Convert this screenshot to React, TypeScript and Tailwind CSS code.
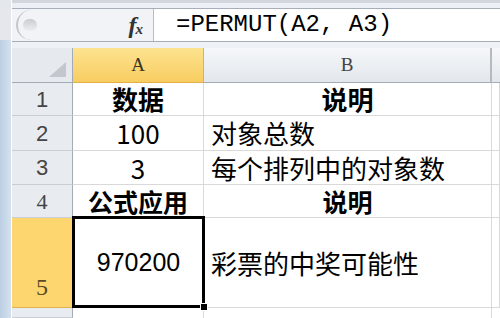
const cjk = "font-['Noto_Sans_CJK_SC',sans-serif]";

const RowHead = ({ n, active = false, className = "" }: { n: string; active?: boolean; className?: string }) => (
  <div
    className={`flex justify-center border-r border-b font-['Liberation_Sans',sans-serif] text-[22px] ${
      active
        ? "bg-[#fdd66f] border-[#e3b24a] text-[#5a4a1e]"
        : "bg-[#e8ebef] border-r-[#a3abb5] border-b-[#c9ced5] text-[#444]"
    } ${className}`}
  >
    {n}
  </div>
);

const Cell = ({
  children,
  center = false,
  bold = false,
  className = "",
}: {
  children?: React.ReactNode;
  center?: boolean;
  bold?: boolean;
  className?: string;
}) => (
  <div
    className={`flex items-center border-r border-b border-[#d9d9d9] bg-white text-black leading-none ${cjk} ${
      center ? "justify-center" : "justify-start pl-[7px]"
    } ${bold ? "font-bold" : "font-normal"} ${className || "text-[26px]"}`}
  >
    {children}
  </div>
);

export default function App() {
  return (
    <div className="w-[500px] h-[318px] overflow-hidden flex bg-[#eef1f5]">
      {/* window frame strip */}
      <div className="w-[12px] flex flex-col border-r border-white">
        <div className="h-[40px] bg-[#e4e8ed]"></div>
        <div className="flex-1 bg-gradient-to-r from-[#bccfe4] to-[#d4e1ee]"></div>
      </div>

      <div className="flex-1 flex flex-col">
        {/* top edge */}
        <div className="h-[8px] bg-[#eceff3] border-t-[3px] border-[#d3d7dd]"></div>

        {/* formula bar */}
        <div className="h-[34px] flex border-y border-[#a8aeb7] bg-[#f1f3f6]">
          <div className="w-[141px] flex items-center justify-between pr-[10px]">
            <div className="ml-[4px] w-[26px] h-[30px] rounded-l-full border-l-2 border-[#c2c7ce] flex items-center justify-center">
              <div className="w-[14px] h-[12px] rounded-full bg-gradient-to-b from-[#c9cdd2] to-[#eceef1]"></div>
            </div>
            <div className="font-['Liberation_Serif',serif] italic font-bold text-[#333] leading-none flex items-end">
              <span className="text-[24px]">f</span>
              <span className="text-[15px] -ml-[1px]">x</span>
            </div>
          </div>
          <div className="flex-1 bg-white border-l border-[#b9bec5] flex items-center pl-[22px] font-['Liberation_Mono',monospace] text-[24px] text-black whitespace-pre">
            =PERMUT(A2, A3)
          </div>
        </div>

        <div className="h-[6px] bg-[#eef1f5]"></div>

        {/* sheet grid */}
        <div className="flex-1 grid grid-cols-[61px_131px_288px_1fr] grid-rows-[35px_33px_35px_34px_33px_90px_1fr] bg-white">
          {/* header row */}
          <div className="relative bg-[#e6e9ee] border-r border-r-[#a3abb5] border-b border-b-[#a3abb5]">
            <div className="absolute right-[6px] bottom-[5px] w-0 h-0 border-l-[17px] border-l-transparent border-b-[15px] border-b-[#c3c7cd]"></div>
          </div>
          <div className="flex items-center justify-center bg-gradient-to-b from-[#fde38f] to-[#f8cd60] border-r border-b border-[#e2b04a] font-['Liberation_Serif',serif] text-[19px] text-[#3c3522]">
            A
          </div>
          <div className="flex items-center justify-center bg-gradient-to-b from-[#f5f7f9] to-[#e3e7ec] border-r-2 border-r-[#b4bac2] border-b border-b-[#a3abb5] font-['Liberation_Serif',serif] text-[19px] text-[#444]">
            B
          </div>
          <div className="bg-gradient-to-b from-[#f5f7f9] to-[#e3e7ec] border-b border-b-[#a3abb5]"></div>

          {/* row 1 */}
          <RowHead n="1" className="items-center" />
          <Cell center bold>数据</Cell>
          <Cell center bold>说明</Cell>
          <Cell />

          {/* row 2 */}
          <RowHead n="2" className="items-center" />
          <Cell center>100</Cell>
          <Cell>对象总数</Cell>
          <Cell />

          {/* row 3 */}
          <RowHead n="3" className="items-center" />
          <Cell center>3</Cell>
          <Cell>每个排列中的对象数</Cell>
          <Cell />

          {/* row 4 */}
          <RowHead n="4" className="items-center font-['Liberation_Serif',serif] text-[20px]" />
          <Cell center bold className="text-[25px]">公式应用</Cell>
          <Cell center bold className="text-[25px]">说明</Cell>
          <Cell />

          {/* row 5 */}
          <RowHead n="5" active className="items-end pb-[2px] font-['Liberation_Serif',serif] text-[24px]" />
          <div className="relative flex items-center justify-center bg-white border-b border-[#d9d9d9] font-['Liberation_Sans',sans-serif] text-[25px] text-black">
            970200
            <div className="absolute -top-[2px] -left-[1px] -right-[1px] -bottom-[1px] border-[3px] border-black"></div>
            <div className="absolute z-10 -right-[4px] -bottom-[4px] w-[8px] h-[8px] bg-black border border-white"></div>
          </div>
          <Cell>彩票的中奖可能性</Cell>
          <Cell />

          {/* row 6 */}
          <RowHead n="" />
          <div className="border-r border-[#d9d9d9]"></div>
          <div className="border-r border-[#d9d9d9]"></div>
          <div></div>
        </div>
      </div>
    </div>
  );
}
